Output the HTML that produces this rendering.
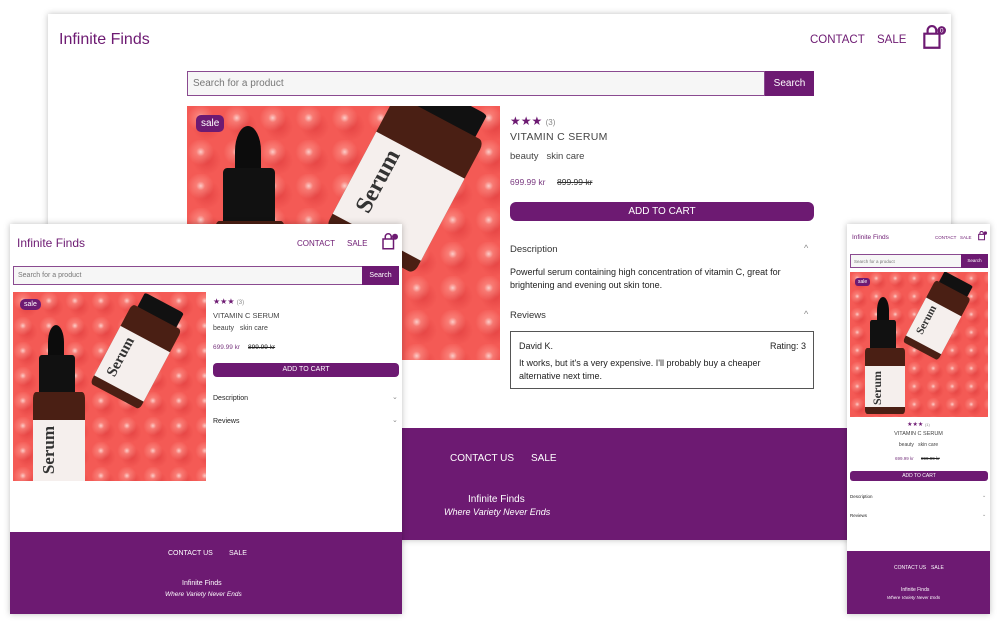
<!DOCTYPE html>
<html><head><meta charset="utf-8"><style>
*{box-sizing:border-box;margin:0;padding:0}
body{width:1000px;height:624px;background:#fff;position:relative;overflow:hidden;font-family:"Liberation Sans",sans-serif;color:#222}
.a{position:absolute}
.win{position:absolute;background:#fff;box-shadow:0 0 6px rgba(0,0,0,.25);overflow:hidden}
.pur{color:#6d1a72}
.img{position:absolute;overflow:hidden;background:#f45a55;
background-image:radial-gradient(circle at 38% 35%,rgba(255,235,230,.8) 0,rgba(255,160,150,.5) 14%,rgba(245,95,90,0) 42%),radial-gradient(circle at 55% 60%,rgba(210,40,45,.45) 0,rgba(0,0,0,0) 50%);
background-size:36px 34px,36px 34px}
.bot{position:absolute;background:#4a1f14;border-radius:6%}
.lab{position:absolute;left:0;right:0;top:28%;height:62%;background:#f5efed}
.lab i{position:absolute;left:12%;top:10%;font-style:normal;font-family:"Liberation Serif",serif;font-weight:bold;color:#333;writing-mode:vertical-rl;transform:rotate(180deg)}
.cap{position:absolute;background:#111;border-radius:8% 8% 2% 2%}
.drop{position:absolute;background:#0c0c0c;border-radius:50% 50% 10% 10%}
.sale{position:absolute;background:#6d1a72;color:#fff;border-radius:5px;font-family:"Liberation Sans",sans-serif}
.search{position:absolute;border:1px solid #8a4a90;background:#f6f6f6;color:#777}
.sbtn{position:absolute;background:#6d1a72;color:#fff;text-align:center}
.btn{position:absolute;background:#6d1a72;color:#fff;text-align:center;border-radius:6px}
.foot{position:absolute;background:#6d1a72;color:#fff;text-align:center}
.star{color:#6d1a72}
</style></head><body>

<!-- BIG WINDOW -->
<div class="win" style="left:48px;top:14px;width:903px;height:526px">
 <div class="a pur" style="left:11px;top:17px;font-size:16px">Infinite Finds</div>
 <div class="a pur" style="left:762px;top:20px;font-size:11.5px">CONTACT</div>
 <div class="a pur" style="left:829px;top:20px;font-size:11.5px">SALE</div>
 <svg class="a" style="left:872px;top:11px" width="26" height="26" viewBox="0 0 24 24"><path d="M4 8h14v13H4z M7 8V5a4 4 0 0 1 8 0v3" fill="none" stroke="#6d1a72" stroke-width="2"/><circle cx="20" cy="5" r="4" fill="#6d1a72"/><text x="20" y="7" font-size="6" fill="#fff" text-anchor="middle" font-family="Liberation Sans">0</text></svg>
 <div class="search" style="left:139px;top:57px;width:578px;height:25px;font-size:10px;padding:6px 5px">Search for a product</div>
 <div class="sbtn" style="left:717px;top:57px;width:49px;height:25px;font-size:10px;line-height:25px">Search</div>
 <div class="img" style="left:139px;top:92px;width:313px;height:254px">
  <div class="drop" style="left:48px;top:20px;width:26px;height:50px"></div>
  <div class="cap" style="left:36px;top:62px;width:52px;height:60px"></div>
  <div class="bot" style="left:28px;top:115px;width:70px;height:160px"></div>
  <div class="a" style="left:175px;top:-20px;width:100px;height:170px;transform:rotate(28deg)"><div class="cap" style="left:10px;top:0;width:80px;height:30px"></div><div class="bot" style="left:0;top:25px;width:100px;height:150px"><div class="lab"><i style="font-size:24px">Serum</i></div></div></div>
  <div class="sale" style="left:9px;top:9px;font-size:10px;padding:3px 5px">sale</div>
 </div>
 <div class="a star" style="left:462px;top:100px;font-size:12px">★★★ <span style="color:#888;font-size:8px">(3)</span></div>
 <div class="a" style="left:462px;top:117px;font-size:10.5px;color:#444;letter-spacing:.3px">VITAMIN C SERUM</div>
 <div class="a" style="left:462px;top:137px;font-size:9.5px;color:#444">beauty &nbsp; skin care</div>
 <div class="a" style="left:462px;top:163px;font-size:8.5px;color:#7a3a80">699.99 kr</div>
 <div class="a" style="left:509px;top:163px;font-size:8.5px;color:#333;text-decoration:line-through">899.99 kr</div>
 <div class="btn" style="left:462px;top:188px;width:304px;height:19px;font-size:10px;line-height:19px">ADD TO CART</div>
 <div class="a" style="left:462px;top:230px;font-size:9.5px;color:#333">Description</div>
 <div class="a" style="left:756px;top:229px;font-size:9px;color:#888">^</div>
 <div class="a" style="left:462px;top:252px;width:290px;font-size:9px;line-height:12.5px;color:#222">Powerful serum containing high concentration of vitamin C, great for brightening and evening out skin tone.</div>
 <div class="a" style="left:462px;top:296px;font-size:9.5px;color:#333">Reviews</div>
 <div class="a" style="left:756px;top:295px;font-size:9px;color:#888">^</div>
 <div class="a" style="left:462px;top:317px;width:304px;height:58px;border:1px solid #555">
  <div class="a" style="left:8px;top:9px;font-size:9px">David K.</div>
  <div class="a" style="right:7px;top:9px;font-size:9px">Rating: 3</div>
  <div class="a" style="left:8px;top:25px;width:285px;font-size:9px;line-height:12.5px">It works, but it's a very expensive. I'll probably buy a cheaper alternative next time.</div>
 </div>
 <div class="foot" style="left:0;top:414px;width:903px;height:112px">
  <div class="a" style="left:402px;top:25px;font-size:10px">CONTACT US</div>
  <div class="a" style="left:483px;top:25px;font-size:10px">SALE</div>
  <div class="a" style="left:420px;top:66px;font-size:10px">Infinite Finds</div>
  <div class="a" style="left:396px;top:79px;font-size:9px;font-style:italic">Where Variety Never Ends</div>
 </div>
</div>

<!-- TABLET WINDOW -->
<div class="win" style="left:10px;top:224px;width:392px;height:390px">
 <div class="a pur" style="left:7px;top:12px;font-size:12px">Infinite Finds</div>
 <div class="a pur" style="left:287px;top:15px;font-size:8px">CONTACT</div>
 <div class="a pur" style="left:337px;top:15px;font-size:8px">SALE</div>
 <svg class="a" style="left:370px;top:9px" width="18" height="18" viewBox="0 0 24 24"><path d="M4 8h14v13H4z M7 8V5a4 4 0 0 1 8 0v3" fill="none" stroke="#6d1a72" stroke-width="2"/><circle cx="20" cy="5" r="4" fill="#6d1a72"/></svg>
 <div class="search" style="left:3px;top:42px;width:350px;height:19px;font-size:7px;padding:5px 4px">Search for a product</div>
 <div class="sbtn" style="left:352px;top:42px;width:37px;height:19px;font-size:7px;line-height:19px">Search</div>
 <div class="img" style="left:3px;top:68px;width:193px;height:189px;background-size:26px 25px,26px 25px">
  <div class="drop" style="left:35px;top:33px;width:16px;height:35px"></div>
  <div class="cap" style="left:26px;top:63px;width:36px;height:42px"></div>
  <div class="bot" style="left:20px;top:100px;width:52px;height:100px"><div class="lab"><i style="font-size:17px">Serum</i></div></div>
  <div class="a" style="left:100px;top:5px;width:56px;height:100px;transform:rotate(28deg)"><div class="cap" style="left:6px;top:0;width:44px;height:20px"></div><div class="bot" style="left:0;top:16px;width:56px;height:90px"><div class="lab"><i style="font-size:15px">Serum</i></div></div></div>
  <div class="sale" style="left:7px;top:7px;font-size:7px;padding:2px 4px">sale</div>
 </div>
 <div class="a star" style="left:203px;top:73px;font-size:8px">★★★ <span style="color:#888;font-size:6px">(3)</span></div>
 <div class="a" style="left:203px;top:87px;font-size:7.5px;color:#444">VITAMIN C SERUM</div>
 <div class="a" style="left:203px;top:101px;font-size:7px;color:#444">beauty &nbsp; skin care</div>
 <div class="a" style="left:203px;top:120px;font-size:6.5px;color:#7a3a80">699.99 kr</div>
 <div class="a" style="left:238px;top:120px;font-size:6.5px;text-decoration:line-through">899.99 kr</div>
 <div class="btn" style="left:203px;top:139px;width:186px;height:14px;font-size:7px;line-height:14px;border-radius:4px">ADD TO CART</div>
 <div class="a" style="left:203px;top:171px;font-size:7px">Description</div>
 <div class="a" style="left:382px;top:169px;font-size:7px;color:#888">⌄</div>
 <div class="a" style="left:203px;top:194px;font-size:7px">Reviews</div>
 <div class="a" style="left:382px;top:192px;font-size:7px;color:#888">⌄</div>
 <div class="foot" style="left:0;top:308px;width:392px;height:82px">
  <div class="a" style="left:158px;top:18px;font-size:7px">CONTACT US</div>
  <div class="a" style="left:219px;top:18px;font-size:7px">SALE</div>
  <div class="a" style="left:172px;top:48px;font-size:7px">Infinite Finds</div>
  <div class="a" style="left:155px;top:59px;font-size:6.5px;font-style:italic">Where Variety Never Ends</div>
 </div>
</div>

<!-- MOBILE WINDOW -->
<div class="win" style="left:847px;top:224px;width:143px;height:390px">
 <div class="a pur" style="left:5px;top:10px;font-size:6.5px">Infinite Finds</div>
 <div class="a pur" style="left:88px;top:11px;font-size:4.5px">CONTACT</div>
 <div class="a pur" style="left:113px;top:11px;font-size:4.5px">SALE</div>
 <svg class="a" style="left:130px;top:7px" width="10" height="10" viewBox="0 0 24 24"><path d="M4 8h14v13H4z M7 8V5a4 4 0 0 1 8 0v3" fill="none" stroke="#6d1a72" stroke-width="2.5"/><circle cx="20" cy="5" r="4" fill="#6d1a72"/></svg>
 <div class="search" style="left:3px;top:30px;width:112px;height:14px;font-size:4.5px;padding:4px 3px">Search for a product</div>
 <div class="sbtn" style="left:114px;top:30px;width:27px;height:14px;font-size:4.5px;line-height:14px">Search</div>
 <div class="img" style="left:3px;top:48px;width:138px;height:145px;background-size:19px 18px,19px 18px">
  <div class="drop" style="left:27px;top:25px;width:12px;height:27px"></div>
  <div class="cap" style="left:20px;top:48px;width:26px;height:32px"></div>
  <div class="bot" style="left:15px;top:76px;width:40px;height:66px"><div class="lab"><i style="font-size:12px">Serum</i></div></div>
  <div class="a" style="left:70px;top:2px;width:40px;height:80px;transform:rotate(28deg)"><div class="cap" style="left:4px;top:0;width:32px;height:15px"></div><div class="bot" style="left:0;top:12px;width:40px;height:70px"><div class="lab"><i style="font-size:11px">Serum</i></div></div></div>
  <div class="sale" style="left:5px;top:6px;font-size:5px;padding:1px 3px;border-radius:3px">sale</div>
 </div>
 <div class="a star" style="left:0;width:143px;text-align:center;top:197px;font-size:6px">★★★ <span style="color:#888;font-size:4px">(1)</span></div>
 <div class="a" style="left:0;width:143px;text-align:center;top:207px;font-size:5.5px;color:#444">VITAMIN C SERUM</div>
 <div class="a" style="left:0;width:143px;text-align:center;top:218px;font-size:5px;color:#444">beauty &nbsp; skin care</div>
 <div class="a" style="left:48px;top:232px;font-size:4.5px;color:#7a3a80">699.99 kr</div>
 <div class="a" style="left:74px;top:232px;font-size:4.5px;text-decoration:line-through">899.99 kr</div>
 <div class="btn" style="left:3px;top:247px;width:138px;height:10px;font-size:5px;line-height:10px;border-radius:3px">ADD TO CART</div>
 <div class="a" style="left:3px;top:270px;font-size:4.5px">Description</div>
 <div class="a" style="left:135px;top:269px;font-size:5px;color:#888">⌄</div>
 <div class="a" style="left:3px;top:289px;font-size:4.5px">Reviews</div>
 <div class="a" style="left:135px;top:288px;font-size:5px;color:#888">⌄</div>
 <div class="foot" style="left:0;top:327px;width:143px;height:63px">
  <div class="a" style="left:47px;top:14px;font-size:5px">CONTACT US</div>
  <div class="a" style="left:84px;top:14px;font-size:5px">SALE</div>
  <div class="a" style="left:54px;top:36px;font-size:5px">Infinite Finds</div>
  <div class="a" style="left:40px;top:44px;font-size:4.5px;font-style:italic">Where Variety Never Ends</div>
 </div>
</div>
</body></html>
